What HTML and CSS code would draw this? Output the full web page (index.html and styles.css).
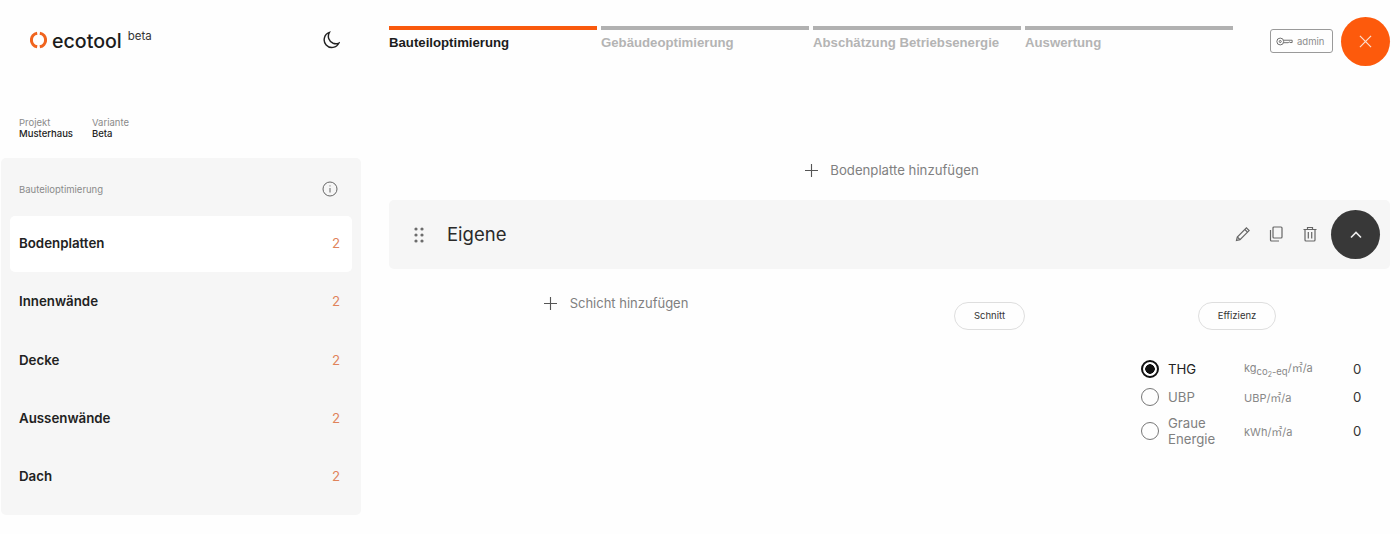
FILE: index.html
```html
<!DOCTYPE html>
<html lang="de">
<head>
    <meta charset="UTF-8">
    <meta name="viewport" content="width=device-width, initial-scale=1.0">
    <title>ecotool</title>
    <link rel="stylesheet" href="styles.css">
</head>
<body>
    <header class="topbar">
        <div class="brand">
            <div class="logo">
                <svg class="logo-mark" viewBox="0 0 18 18">
                    <path d="M7.6 1.8A7.3 7.3 0 0 0 7.6 16.2"></path>
                    <path d="M10.4 1.8A7.3 7.3 0 0 1 10.4 16.2"></path>
                </svg>
                <span class="logo-name">ecotool</span>
                <span class="logo-beta">beta</span>
            </div>
            <svg class="moon" viewBox="0 0 20 20">
                <path d="M8.2 1.6A8.6 8.6 0 1 0 18.8 13.4 9 9 0 0 1 12.4 13.6 8.4 8.4 0 0 1 8.2 1.6Z"></path>
            </svg>
        </div>
        <nav class="steps">
            <div class="step active">Bauteiloptimierung</div>
            <div class="step">Gebäudeoptimierung</div>
            <div class="step">Abschätzung Betriebsenergie</div>
            <div class="step">Auswertung</div>
        </nav>
        <div class="user">
            <div class="admin">
                <svg class="key" viewBox="0 0 20 10">
                    <circle cx="5" cy="5" r="4"></circle>
                    <circle cx="5" cy="5" r="1.2"></circle>
                    <path d="M9 3.5H19V6.2H16.5L15.5 5.4 14.4 6.4H9"></path>
                </svg>
                <span>admin</span>
            </div>
            <div class="close">
                <svg viewBox="0 0 14 14">
                    <path d="M1 1L13 13M13 1L1 13"></path>
                </svg>
            </div>
        </div>
    </header>

    <div class="page">
        <aside class="left">
            <div class="meta">
                <div>
                    <div class="meta-label">Projekt</div>
                    <div class="meta-value">Musterhaus</div>
                </div>
                <div>
                    <div class="meta-label">Variante</div>
                    <div class="meta-value">Beta</div>
                </div>
            </div>
            <div class="sidebar">
                <div class="sidebar-head">
                    <span>Bauteiloptimierung</span>
                    <svg class="info" viewBox="0 0 16 16">
                        <circle cx="8" cy="8" r="7"></circle>
                        <path d="M8 7V11.5M8 4.4V5.4"></path>
                    </svg>
                </div>
                <div class="item active"><span>Bodenplatten</span><span class="count">2</span></div>
                <div class="item"><span>Innenwände</span><span class="count">2</span></div>
                <div class="item"><span>Decke</span><span class="count">2</span></div>
                <div class="item"><span>Aussenwände</span><span class="count">2</span></div>
                <div class="item"><span>Dach</span><span class="count">2</span></div>
            </div>
        </aside>

        <main class="main">
            <div class="add add-top">
                <svg class="plus" viewBox="0 0 14 14"><path d="M7 0V14M0 7H14"></path></svg>
                <span>Bodenplatte hinzufügen</span>
            </div>

            <div class="card">
                <svg class="grip" viewBox="0 0 10 16">
                    <circle cx="2" cy="2" r="1.6"></circle>
                    <circle cx="8" cy="2" r="1.6"></circle>
                    <circle cx="2" cy="8" r="1.6"></circle>
                    <circle cx="8" cy="8" r="1.6"></circle>
                    <circle cx="2" cy="14" r="1.6"></circle>
                    <circle cx="8" cy="14" r="1.6"></circle>
                </svg>
                <div class="card-title">Eigene</div>
                <div class="card-actions">
                    <svg class="action" viewBox="-1 0 16 16">
                        <path d="M1.5 14.5L2.3 11 11.4 1.9 14.1 4.6 5 13.7Z"></path>
                        <path d="M9.8 3.5L12.5 6.2M2.3 11L5 13.7"></path>
                    </svg>
                    <svg class="action" viewBox="0 0 16 16">
                        <rect x="5" y="1" width="9" height="11" rx="1"></rect>
                        <path d="M2.5 4V14C2.5 14.6 2.9 15 3.5 15H11"></path>
                    </svg>
                    <svg class="action" viewBox="0 0 16 16">
                        <path d="M3 3.5V14C3 14.6 3.4 15 4 15H12C12.6 15 13 14.6 13 14V3.5"></path>
                        <path d="M1.5 3.5H14.5M5.5 3.5V1.5H10.5V3.5M6.3 6V12.5M9.7 6V12.5"></path>
                    </svg>
                </div>
                <div class="collapse">
                    <svg viewBox="0 0 12 8"><path d="M1 6.5L6 1.5 11 6.5"></path></svg>
                </div>
            </div>

            <div class="detail">
                <div class="add">
                    <svg class="plus" viewBox="0 0 14 14"><path d="M7 0V14M0 7H14"></path></svg>
                    <span>Schicht hinzufügen</span>
                </div>
                <div class="pill-col">
                    <div class="pill pill-schnitt">Schnitt</div>
                </div>
                <div class="results">
                    <div class="pill pill-effizienz">Effizienz</div>
                    <div class="result selected">
                        <span class="radio"></span>
                        <span class="result-name">THG</span>
                        <span class="unit">kg<sub>co<sub>2</sub>-eq</sub>/㎡/a</span>
                        <span class="result-value">0</span>
                    </div>
                    <div class="result">
                        <span class="radio"></span>
                        <span class="result-name">UBP</span>
                        <span class="unit">UBP/㎡/a</span>
                        <span class="result-value">0</span>
                    </div>
                    <div class="result">
                        <span class="radio"></span>
                        <span class="result-name">Graue Energie</span>
                        <span class="unit">kWh/㎡/a</span>
                        <span class="result-value">0</span>
                    </div>
                </div>
            </div>
        </main>
    </div>
</body>
</html>
```

FILE: styles.css
```css
* {
    margin: 0;
    padding: 0;
    box-sizing: border-box;
}

body {
    font-family: 'Inter', 'Noto Sans CJK SC', sans-serif;
    background: #fefefe;
    color: #222;
    height: 534px;
    overflow: hidden;
}

svg {
    display: block;
    fill: none;
}

.topbar {
    display: flex;
    height: 80px;
}

.brand {
    width: 389px;
    height: 80px;
    padding: 0 49px 0 29px;
    display: flex;
    justify-content: space-between;
    align-items: center;
}

.logo {
    display: flex;
    align-items: flex-start;
    padding-left: 1px;
}

.logo-mark {
    width: 17px;
    height: 18px;
    margin-top: 3px;
    stroke: #f0641e;
    stroke-width: 3.2;
}

.logo-name {
    font-size: 19.6px;
    font-weight: 500;
    line-height: 24px;
    margin-left: 5px;
    padding-top: 1px;
    color: #1c1c1c;
}

.logo-beta {
    font-size: 11.5px;
    line-height: 14px;
    margin-left: 6px;
    padding-top: 1px;
    color: #333;
}

.moon {
    width: 18px;
    height: 18px;
    stroke: #222;
    stroke-width: 1.6;
}

.steps {
    display: flex;
    gap: 4px;
    padding-top: 26px;
}

.step {
    width: 208px;
    border-top: 4px solid #b1b1b1;
    padding-top: 4px;
    font-family: 'Liberation Sans', sans-serif;
    font-size: 13.2px;
    font-weight: bold;
    line-height: 18px;
    color: #b4b4b4;
    white-space: nowrap;
}

.step.active {
    border-top-color: #f9590d;
    color: #1c1c1c;
}

.user {
    display: flex;
    align-items: flex-start;
    margin-left: 37px;
    padding-top: 17px;
    gap: 8px;
}

.admin {
    display: flex;
    align-items: center;
    gap: 4px;
    width: 63px;
    height: 24px;
    margin-top: 12px;
    padding-left: 5px;
    border: 1px solid #9a9a9a;
    border-radius: 3px;
    font-size: 9.5px;
    color: #8c8c8c;
}

.key {
    width: 17px;
    height: 9px;
    stroke: #666;
    stroke-width: 1.1;
}

.close {
    width: 49px;
    height: 49px;
    border-radius: 50%;
    background: #fd5a0c;
    display: flex;
    align-items: center;
    justify-content: center;
}

.close svg {
    width: 13px;
    height: 13px;
    stroke: #fde0d0;
    stroke-width: 1.3;
}

.page {
    display: flex;
}

.left {
    width: 361px;
    padding-left: 1px;
}

.meta {
    display: flex;
    gap: 19px;
    padding: 37px 0 0 18px;
    height: 78px;
    font-size: 9.5px;
    line-height: 11px;
}

.meta-label {
    color: #8a8a8a;
}

.meta-value {
    color: #222;
    font-weight: 500;
}

.sidebar {
    background: #f6f6f6;
    border-radius: 5px;
    height: 357px;
    padding: 0 9px;
}

.sidebar-head {
    height: 58px;
    display: flex;
    align-items: center;
    justify-content: space-between;
    padding: 4px 14px 0 9px;
    font-size: 9.5px;
    color: #8a8a8a;
}

.info {
    width: 16px;
    height: 16px;
    stroke: #666;
    stroke-width: 1;
}

.item {
    display: flex;
    justify-content: space-between;
    align-items: center;
    height: 56px;
    margin-bottom: 2.25px;
    padding: 0 12px 2px 9px;
    border-radius: 5px;
    font-size: 13.3px;
    font-weight: 600;
    color: #222;
}

.item.active {
    background: #fff;
}

.count {
    font-weight: 400;
    color: #e0835a;
}

.main {
    width: 1001px;
    margin-left: 28px;
}

.add {
    display: flex;
    align-items: center;
    justify-content: center;
    gap: 12px;
    font-size: 13.2px;
    color: #808080;
}

.add-top {
    height: 40px;
    margin-top: 70px;
    margin-bottom: 10px;
    padding-left: 5px;
}

.plus {
    width: 13px;
    height: 13px;
    stroke: #555;
    stroke-width: 1.2;
}

.card {
    display: flex;
    align-items: center;
    height: 69px;
    padding: 0 10px 0 25px;
    background: #f6f6f6;
    border-radius: 5px;
}

.grip {
    width: 10px;
    height: 16px;
    fill: #6c6c6c;
}

.card-title {
    margin-left: 23px;
    padding-bottom: 2px;
    font-size: 18.5px;
    color: #2a2a2a;
}

.card-actions {
    display: flex;
    gap: 18px;
    margin-left: auto;
    margin-right: 13px;
    padding-bottom: 2px;
}

.action {
    width: 16px;
    height: 16px;
    stroke: #666;
    stroke-width: 1.2;
}

.collapse {
    width: 49px;
    height: 49px;
    border-radius: 50%;
    background: #383838;
    display: flex;
    align-items: center;
    justify-content: center;
}

.collapse svg {
    width: 12px;
    height: 8px;
    stroke: #eee;
    stroke-width: 1.6;
}

.detail {
    display: grid;
    grid-template-columns: 454px 293px 254px;
    align-items: start;
}

.detail .add {
    height: 24px;
    margin-top: 22px;
    gap: 13px;
    font-size: 13px;
}

.pill-col {
    display: flex;
    justify-content: center;
    padding-top: 33px;
}

.pill {
    display: flex;
    align-items: center;
    justify-content: center;
    height: 28px;
    padding-bottom: 1px;
    border: 1px solid #dedede;
    border-radius: 14px;
    font-size: 9.5px;
    color: #333;
}

.pill-schnitt {
    width: 71px;
}

.pill-effizienz {
    width: 78px;
    margin: 33px 0 25px 62px;
}

.result {
    display: grid;
    grid-template-columns: 27px 76px 1fr 8px;
    align-items: center;
    margin-left: 5px;
    margin-right: 29px;
    height: 28px;
    font-size: 13.2px;
    color: #808080;
}

.result:last-child {
    height: 40px;
}

.result.selected {
    color: #222;
}

.radio {
    width: 18px;
    height: 18px;
    border: 1.5px solid #777;
    border-radius: 50%;
}

.selected .radio {
    border: 2px solid #111;
    background: radial-gradient(circle, #111 0, #111 4.5px, transparent 5px);
}

.result-name {
    line-height: 16px;
    width: 60px;
}

.unit {
    font-size: 11px;
    color: #888;
}

.unit sub {
    font-size: 9.5px;
    vertical-align: -3px;
}

.unit sub sub {
    font-size: 7px;
    vertical-align: -2px;
}

.result-value {
    color: #333;
}
```
